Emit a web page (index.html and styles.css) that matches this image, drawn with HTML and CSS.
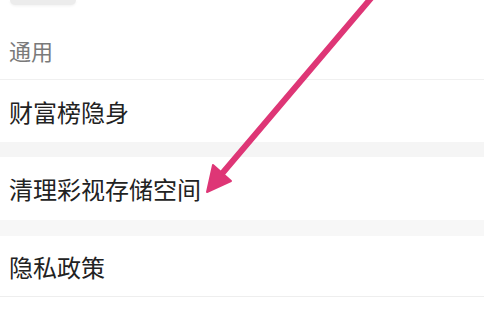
FILE: index.html
```html
<!DOCTYPE html>
<html lang="zh-CN">
<head>
<meta charset="utf-8">
<link rel="stylesheet" href="styles.css">
</head>
<body>
<div class="page">
  <div class="top-pill"></div>
  <div class="section-head">通用</div>
  <div class="row">财富榜隐身</div>
  <div class="band"></div>
  <div class="row row-mid">清理彩视存储空间</div>
  <div class="band band-2"></div>
  <div class="row row-last">隐私政策</div>
  <svg class="arrow" width="484" height="315" viewBox="0 0 484 315">
    <line x1="378" y1="-10" x2="220" y2="176" stroke="#de3676" stroke-width="6" stroke-linecap="round"/>
    <polygon points="207,192 231,181 213,165" fill="#de3676" stroke="#de3676" stroke-width="2" stroke-linejoin="round"/>
  </svg>
</div>
</body>
</html>
```
FILE: styles.css
```css
html, body {
  margin: 0;
  padding: 0;
  background: #ffffff;
}
.page {
  position: relative;
  width: 484px;
  height: 315px;
  overflow: hidden;
  font-family: "Noto Sans CJK SC", "Noto Sans", sans-serif;
  background: #ffffff;
}
.top-pill {
  margin-left: 10px;
  width: 66px;
  height: 5px;
  background: #ececec;
  border-radius: 0 0 8px 8px;
  box-shadow: 0 1px 3px rgba(0, 0, 0, 0.06);
}
.section-head {
  height: 75px;
  box-sizing: border-box;
  padding-left: 9px;
  padding-top: 16px;
  display: flex;
  align-items: center;
  font-size: 22px;
  color: #7a7a7a;
  border-bottom: 1px solid #f0f0f0;
}
.row {
  height: 62px;
  display: flex;
  align-items: center;
  padding-left: 9px;
  font-size: 24px;
  color: #222222;
  background: #ffffff;
}
.row-mid {
  height: 63px;
}
.row-last {
  height: 60px;
  border-bottom: 1px solid #eeeeee;
}
.band {
  height: 15px;
  background: #f5f5f5;
}
.band-2 {
  height: 16px;
  background: #f7f7f7;
}
.arrow {
  position: absolute;
  left: 0;
  top: 0;
}
```
